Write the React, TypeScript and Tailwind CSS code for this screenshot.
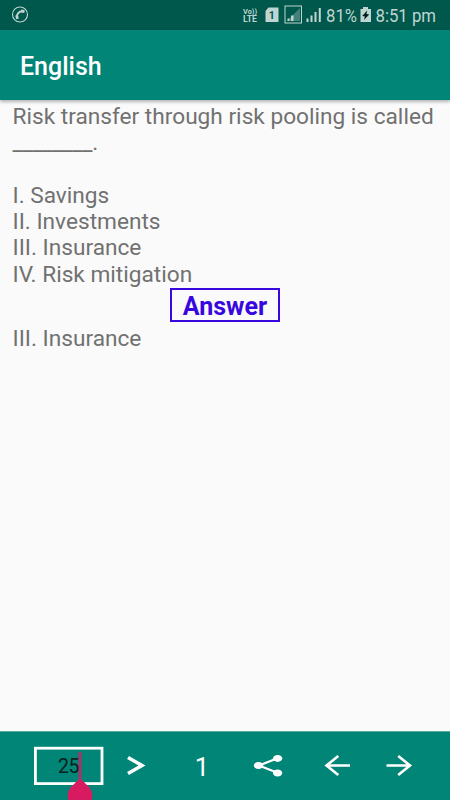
import React from "react";

const OPTIONS = ["I. Savings", "II. Investments", "III. Insurance", "IV. Risk mitigation"];

function StatusBar() {
  return (
    <div className="h-[30px] shrink-0 bg-[#00574b] text-[#bfd5d2]">
      <svg width="450" height="30" viewBox="0 0 450 30" className="block" fill="currentColor">
        <circle cx="20" cy="14.5" r="7.5" fill="none" stroke="currentColor" strokeWidth="1.1" />
        <path d="M16.9 18.2C16.1 14 19 11 23 11.2" fill="none" stroke="currentColor" strokeWidth="2" />
        <path d="M21.1 9.4l3.6.6-.4 3-2.6-.5zM15.3 15.6l2.9.4.6 2.5-2.6.8z" />
        <g fontFamily="Roboto, sans-serif" fontWeight="700">
          <text x="243" y="13.5" fontSize="7.500" textLength="14" lengthAdjust="spacingAndGlyphs">Vo))</text>
          <text x="243" y="22.2" fontSize="8.300" textLength="14" lengthAdjust="spacingAndGlyphs">LTE</text>
        </g>
        <path d="M268.500 7.500H278.500v14.500h-13V11z" />
        <text x="271.8" y="18.7" fill="#00574b" fontFamily="Roboto, sans-serif" fontWeight="700" fontSize="10.500" textAnchor="middle">1</text>
        <rect x="285" y="6" width="16.5" height="17" fill="none" stroke="currentColor" strokeWidth="1" />
        <path d="M300 8v13h-13z" opacity=".35" />
        <path d="M287.5 18.5h2V21h-2zM291 15.5h2.5V21H291z" />
        <path d="M306.5 18.5h2V22h-2zM310.5 15.5h2V22h-2zM314.5 12h2v10h-2zM318.8 8h2v14h-2z" />
        <g fontFamily="Roboto, sans-serif" fontSize="19.2">
          <text x="326" y="21.5" textLength="31" lengthAdjust="spacingAndGlyphs">81%</text>
          <text x="375.5" y="21.5" textLength="60.5" lengthAdjust="spacingAndGlyphs">8:51 pm</text>
        </g>
        <path d="M363 7h5v2h3v13h-10.500V9H363z" />
        <path d="M367.200 10.500l-5 5.500 2.700.6-.9 3.400 5.200-5.400-2.700-.7z" fill="#00201b" />
      </svg>
    </div>
  );
}

function BottomBar() {
  return (
    <footer className="h-[69px] shrink-0 bg-[#008577] border-t border-[#5fa69d]">
      <svg width="450" height="68" viewBox="0 732 450 68" className="block" fill="none" stroke="white">
        <rect x="35.400" y="748.200" width="66.600" height="35.400" strokeWidth="2.800" />
        <text x="58" y="773" fill="#07211e" stroke="none" fontFamily="Roboto, sans-serif" fontSize="19.500" textLength="21.500">25</text>
        <path d="M80 752v28" stroke="#d81b60" strokeWidth="2.400" />
        <path d="M80 778.200l8.800 8.600a12.500 12.500 0 0 1 1.800 15H69.400a12.500 12.500 0 0 1 1.800-15z" fill="#d81b60" stroke="none" />
        <path d="M128 757.400l14 8.100-14 8.100" strokeWidth="3.500" />
        <text x="202" y="776" fill="white" stroke="none" fontFamily="Roboto, sans-serif" fontSize="25.500" textAnchor="middle">1</text>
        <path d="M277.500 758.300l-18.500 7.200 18.500 7.200" strokeWidth="2.200" />
        <g fill="white" stroke="none">
          <ellipse cx="258.500" cy="765.500" rx="4.700" ry="3.500" />
          <ellipse cx="277.600" cy="758.400" rx="4.700" ry="3.500" />
          <ellipse cx="277.600" cy="773" rx="4.700" ry="3.500" />
        </g>
        <path d="M350 765.500h-23.500M338.300 756l-11.800 9.500 11.800 9.500" strokeWidth="2.600" />
        <path d="M386.500 765.500H410M398.200 756l11.800 9.500-11.800 9.500" strokeWidth="2.600" />
      </svg>
    </footer>
  );
}

export default function App() {
  return (
    <div className="flex h-[800px] w-[450px] flex-col overflow-hidden bg-[#fafafa] font-[Roboto,sans-serif]">
      <StatusBar />
      <header className="z-10 flex h-[70px] shrink-0 items-center bg-[#008577] pl-5 pt-[3px] shadow-[0_2px_3px_rgba(0,0,0,0.28)]">
        <h1 className="text-[25px] font-medium leading-none text-white">English</h1>
      </header>
      <main className="flex-1 pl-[12.5px] pt-[4px] text-[22.66px] leading-[26.25px] text-[#717171]">
        <p className="whitespace-nowrap">Risk transfer through risk pooling is called</p>
        <p className="tracking-[-0.25px]">________.</p>
        <div className="h-[26.25px]" />
        {OPTIONS.map((option) => (
          <p key={option}>{option}</p>
        ))}
        <button className="ml-[157.5px] mt-[0.250px] flex h-[34px] w-[110px] items-center justify-center border-2 border-[#3806df] pt-[2px] text-[25px] font-bold leading-none text-[#3806df]">
          Answer
        </button>
        <p className="mt-[3.500px]">III. Insurance</p>
      </main>
      <BottomBar />
    </div>
  );
}
